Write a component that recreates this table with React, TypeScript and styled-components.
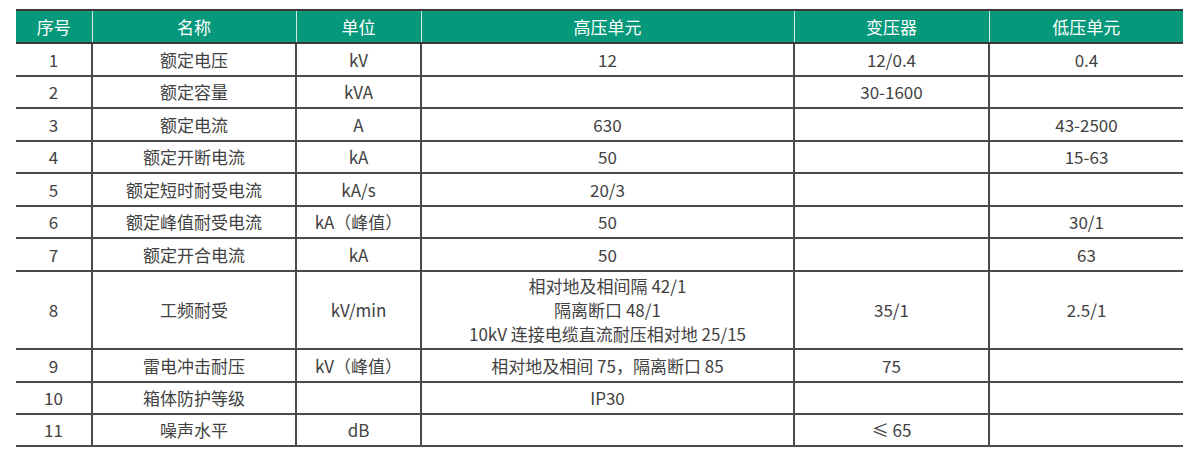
import React from 'react';
import styled, { createGlobalStyle } from 'styled-components';

const GlobalStyle = createGlobalStyle`
  html, body {
    margin: 0;
    padding: 0;
    background: #fff;
  }
`;

const Page = styled.div`
  width: 1200px;
  height: 458px;
  box-sizing: border-box;
  padding: 9px 17px 0 16px;
  background: #fff;
  font-family: "Noto Sans CJK SC", "Noto Sans", sans-serif;
`;

const Table = styled.table`
  width: 1167px;
  table-layout: fixed;
  border-collapse: collapse;
  border-top: 2px solid #3a3a3a;
`;

const HeadCell = styled.th`
  height: 31px;
  padding: 0;
  background: #06987a;
  color: #fff;
  font-size: 17px;
  font-weight: 400;
  text-align: center;
  border-left: 1px solid #cfe9e2;
  border-bottom: 2px solid #3a3a3a;

  &:first-child {
    border-left: none;
  }
`;

const Row = styled.tr<{ $h: number }>`
  height: ${p => p.$h}px;
`;

const Cell = styled.td`
  padding: 0;
  color: #424242;
  font-size: 17px;
  line-height: 24px;
  text-align: center;
  vertical-align: middle;
  border-left: 2px solid #4a4a4a;
  border-bottom: 2px solid #4a4a4a;

  &:first-child {
    border-left: none;
  }
`;

const widths = [76, 204, 125, 373, 195, 194];
const heads = ['序号', '名称', '单位', '高压单元', '变压器', '低压单元'];

type RowData = { h: number; cells: React.ReactNode[] };

const rows: RowData[] = [
  { h: 33, cells: ['1', '额定电压', 'kV', '12', '12/0.4', '0.4'] },
  { h: 32, cells: ['2', '额定容量', 'kVA', '', '30-1600', ''] },
  { h: 33, cells: ['3', '额定电流', 'A', '630', '', '43-2500'] },
  { h: 32, cells: ['4', '额定开断电流', 'kA', '50', '', '15-63'] },
  { h: 33, cells: ['5', '额定短时耐受电流', 'kA/s', '20/3', '', ''] },
  { h: 32, cells: ['6', '额定峰值耐受电流', 'kA（峰值）', '50', '', '30/1'] },
  { h: 33, cells: ['7', '额定开合电流', 'kA', '50', '', '63'] },
  {
    h: 78,
    cells: [
      '8',
      '工频耐受',
      'kV/min',
      <>
        相对地及相间隔 42/1
        <br />
        隔离断口 48/1
        <br />
        10kV 连接电缆直流耐压相对地 25/15
      </>,
      '35/1',
      '2.5/1',
    ],
  },
  { h: 33, cells: ['9', '雷电冲击耐压', 'kV（峰值）', '相对地及相间 75，隔离断口 85', '75', ''] },
  { h: 32, cells: ['10', '箱体防护等级', '', 'IP30', '', ''] },
  { h: 32, cells: ['11', '噪声水平', 'dB', '', '≤ 65', ''] },
];

const App = () => (
  <Page>
    <GlobalStyle />
    <Table>
      <colgroup>
        {widths.map((w, i) => (
          <col key={i} style={{ width: w }} />
        ))}
      </colgroup>
      <thead>
        <tr>
          {heads.map(h => (
            <HeadCell key={h}>{h}</HeadCell>
          ))}
        </tr>
      </thead>
      <tbody>
        {rows.map((r, i) => (
          <Row key={i} $h={r.h}>
            {r.cells.map((c, j) => (
              <Cell key={j}>{c}</Cell>
            ))}
          </Row>
        ))}
      </tbody>
    </Table>
  </Page>
);

export default App;
